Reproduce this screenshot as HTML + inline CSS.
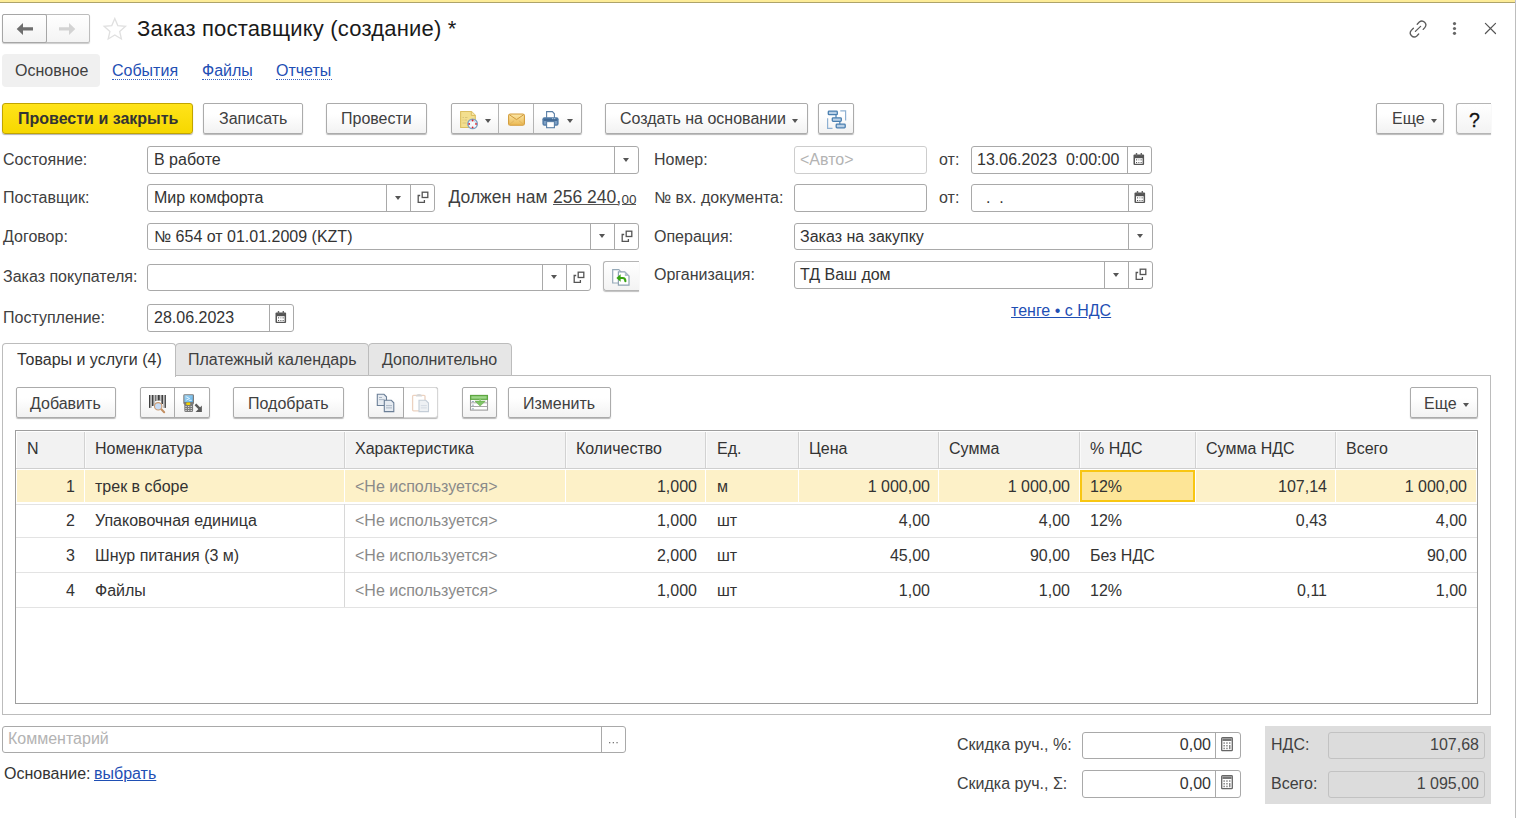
<!DOCTYPE html><html><head><meta charset="utf-8"><style>
html,body{margin:0;padding:0;background:#fff;width:1516px;height:818px;overflow:hidden;position:relative}
body{font-family:"Liberation Sans", sans-serif}
.t{position:absolute;white-space:nowrap}
.b{position:absolute;box-sizing:border-box}
.btn{position:absolute;box-sizing:border-box;border:1px solid #ababab;border-radius:2px;background:linear-gradient(#ffffff 35%,#f2f2f2);box-shadow:0 1px 1px rgba(0,0,0,0.28)}
.fld{position:absolute;box-sizing:border-box;border:1px solid #a9a9a9;border-radius:3px;background:#fff}
.dv{position:absolute;width:1px;background:#a9a9a9}
.dd{position:absolute;width:0;height:0;border-left:3px solid transparent;border-right:3px solid transparent;border-top:4px solid #555}
svg{position:absolute}
</style></head><body>
<div class="b" style="left:0px;top:0px;width:1515px;height:2px;background:#fdec98"></div>
<div class="b" style="left:0px;top:2px;width:1515px;height:1px;background:#aea36a"></div>
<div class="b" style="left:1515px;top:0px;width:1px;height:4px;background:#c2c2d0"></div>
<div class="b" style="left:1515px;top:4px;width:1px;height:814px;background:#bdbdbd"></div>
<div class="b" style="left:2px;top:14px;width:88px;height:29px;border:1px solid #bdbdbd;border-radius:2px;background:linear-gradient(#fff,#f4f4f4);box-shadow:0 1px 1px rgba(0,0,0,0.2)"></div>
<div class="b" style="left:2px;top:14px;width:45px;height:29px;border:1px solid #a6a6a6;border-radius:2px;background:linear-gradient(#fff,#f2f2f2)"></div>
<svg style="left:16px;top:22px" width="18" height="14" viewBox="0 0 18 14"><path d="M0.7 7 L7 0.9 L7 5.3 L17 5.3 L17 8.6 L7 8.6 L7 13.1 Z" fill="#6e6e6e"/></svg>
<svg style="left:59px;top:22px" width="18" height="14" viewBox="0 0 18 14"><path d="M16.3 7 L10 0.9 L10 5.3 L0 5.3 L0 8.6 L10 8.6 L10 13.1 Z" fill="#d3d3d3"/></svg>
<svg style="left:102px;top:16.7px" width="26" height="25" viewBox="0 0 26 25"><path d="M12.8 1.5 L15.8 8.6 L23.5 9.3 L17.7 14.4 L19.4 22 L12.8 18 L6.2 22 L7.9 14.4 L2.1 9.3 L9.8 8.6 Z" fill="none" stroke="#e0e0e0" stroke-width="1.3" stroke-linejoin="miter"/></svg>
<div class="t" style="left:137px;top:18.38px;font-size:22px;line-height:22px;color:#1a1a1a;font-weight:normal;letter-spacing:0.19px">Заказ поставщику (создание) *</div>
<svg style="left:1405px;top:16px" width="26" height="26" viewBox="1405 16 26 26" fill="none" stroke="#5a5a5a" stroke-width="1.3" stroke-linecap="round"><path d="M1417.2 24.2 L1419.3 22.1 A3.9 3.9 0 0 1 1424.8 27.6 L1423.2 29.4"/><path d="M1413.4 28.3 L1411.3 30.4 A3.9 3.9 0 0 0 1416.8 35.9 L1418.7 34"/><path d="M1415.4 31.4 L1420.6 26.4"/></svg>
<svg style="left:1450px;top:20px" width="10" height="17" viewBox="1450 20 10 17" fill="#666"><circle cx="1454.5" cy="23.6" r="1.6"/><circle cx="1454.5" cy="28.5" r="1.6"/><circle cx="1454.5" cy="33.3" r="1.6"/></svg>
<svg style="left:1482px;top:20px" width="17" height="17" viewBox="1482 20 17 17" fill="none" stroke="#555" stroke-width="1.2" stroke-linecap="round"><path d="M1485.4 23.4 L1495.5 33.5 M1495.5 23.4 L1485.4 33.5"/></svg>
<div class="b" style="left:2px;top:54px;width:98px;height:33px;background:#f0f0f0;border-radius:4px"></div>
<div class="t" style="left:15px;top:63.46px;font-size:16px;line-height:16px;color:#404040;font-weight:normal;">Основное</div>
<div class="t" style="left:112px;top:63.46px;font-size:16px;line-height:16px;color:#1f4fb4;font-weight:normal;">События</div>
<div class="b" style="left:112px;top:79px;width:66px;height:1px;border-top:1px dotted #3a64c0"></div>
<div class="t" style="left:202px;top:63.46px;font-size:16px;line-height:16px;color:#1f4fb4;font-weight:normal;">Файлы</div>
<div class="b" style="left:202px;top:79px;width:50px;height:1px;border-top:1px dotted #3a64c0"></div>
<div class="t" style="left:276px;top:63.46px;font-size:16px;line-height:16px;color:#1f4fb4;font-weight:normal;">Отчеты</div>
<div class="b" style="left:276px;top:79px;width:56px;height:1px;border-top:1px dotted #3a64c0"></div>
<div class="b" style="left:2px;top:103px;width:191px;height:31px;border:1px solid #c1a400;border-radius:3px;background:linear-gradient(#ffe31a,#f6d800);box-shadow:0 1px 1px rgba(0,0,0,0.3)"></div>
<div class="t" style="left:18px;top:111.46px;font-size:16px;line-height:16px;color:#333;font-weight:bold;">Провести и закрыть</div>
<div class="btn" style="left:203px;top:103px;width:100px;height:31px;"></div>
<div class="t" style="left:219px;top:111.46px;font-size:16px;line-height:16px;color:#404040;font-weight:normal;">Записать</div>
<div class="btn" style="left:326px;top:103px;width:101px;height:31px;"></div>
<div class="t" style="left:341px;top:111.46px;font-size:16px;line-height:16px;color:#404040;font-weight:normal;">Провести</div>
<div class="btn" style="left:451px;top:103px;width:131px;height:31px;"></div>
<div class="b" style="left:498px;top:104px;width:1px;height:29px;background:#b4b4b4"></div>
<div class="b" style="left:533px;top:104px;width:1px;height:29px;background:#b4b4b4"></div>
<div class="dd" style="left:485px;top:119px"></div>
<div class="dd" style="left:567px;top:119px"></div>
<svg style="left:458px;top:109px" width="22" height="22" viewBox="458 109 22 22"><path d="M460.6 111.5 H471.3 L475.3 115.5 V127.5 H460.6 Z" fill="#f3df8e" stroke="#dcbf62" stroke-width="1.1" stroke-linejoin="round"/><path d="M471.3 111.5 V115.5 H475.3" fill="#f7e7a8" stroke="#dcbf62" stroke-width="1"/><g fill="#d9c47a"><rect x="462.5" y="117" width="1.5" height="1"/><rect x="465" y="117" width="2.5" height="1"/><rect x="462.5" y="119.5" width="1" height="1"/><rect x="464.5" y="119.5" width="2.5" height="1"/><rect x="462.5" y="122.5" width="4" height="1"/></g><circle cx="472.6" cy="123.9" r="4.7" fill="#f4f8fc" stroke="#7fa2c4" stroke-width="1.5"/><path d="M470.5 121.3 A3.3 3.3 0 0 1 475.7 122.8" stroke="#b9cfe5" stroke-width="1" fill="none"/><rect x="472.2" y="120.8" width="0.9" height="3.3" fill="#fff"/><g fill="#e0242a"><circle cx="472.6" cy="120.5" r="0.9"/><circle cx="472.6" cy="127.3" r="0.9"/><circle cx="469.2" cy="123.9" r="0.9"/><circle cx="476" cy="123.9" r="0.9"/></g></svg>
<svg style="left:506px;top:111px" width="21" height="17" viewBox="506 111 21 17"><defs><linearGradient id="eg" x1="0" y1="0" x2="0" y2="1"><stop offset="0" stop-color="#fbe7a8"/><stop offset="1" stop-color="#ebb851"/></linearGradient></defs><rect x="508.6" y="114" width="15.8" height="11.2" rx="1.8" fill="url(#eg)" stroke="#d39c3a" stroke-width="1.1"/><path d="M509.5 114.8 L516.5 119.6 L523.5 114.8" fill="none" stroke="#cf9a3e" stroke-width="1"/><path d="M509.5 124.6 L514.2 120.5 M523.5 124.6 L518.8 120.5" fill="none" stroke="#dcae5c" stroke-width="0.8"/></svg>
<svg style="left:540px;top:109px" width="21" height="21" viewBox="540 109 21 21"><path d="M546.6 117.8 V111.6 H552.4 L554.4 113.8 V117.8" fill="#fff" stroke="#5a7fa6" stroke-width="1.1"/><rect x="542.4" y="117.3" width="16.2" height="8.4" rx="2" fill="#4f79a5"/><rect x="543.8" y="120.6" width="13.4" height="3.8" fill="#7c9fc4"/><rect x="544" y="119.6" width="13" height="0.9" fill="#2c537e"/><rect x="552.3" y="118.2" width="0.9" height="0.9" fill="#dfe8f2"/><rect x="554.3" y="118.2" width="0.9" height="0.9" fill="#dfe8f2"/><rect x="546.6" y="121.6" width="7.8" height="6.1" fill="#fff" stroke="#5a7fa6" stroke-width="1.1"/></svg>
<div class="btn" style="left:605px;top:103px;width:203px;height:31px;"></div>
<div class="t" style="left:620px;top:111.46px;font-size:16px;line-height:16px;color:#404040;font-weight:normal;">Создать на основании</div>
<div class="dd" style="left:792px;top:119px"></div>
<div class="btn" style="left:818px;top:103px;width:36px;height:31px;"></div>
<svg style="left:825px;top:108px" width="22" height="23" viewBox="825 108 22 23" fill="none"><rect x="828.3" y="111.1" width="9" height="3.6" rx="0.8" fill="#b9d0e6" stroke="#4a7fb0" stroke-width="1.3"/><rect x="832.3" y="117.8" width="9" height="3.6" rx="0.8" fill="#b9d0e6" stroke="#4a7fb0" stroke-width="1.3"/><rect x="836.2" y="124.2" width="9" height="3.6" rx="0.8" fill="#b9d0e6" stroke="#4a7fb0" stroke-width="1.3"/><path d="M836 114.7 V117.8 M839.8 121.4 V124.2" stroke="#4a7fb0" stroke-width="1.2"/><path d="M840.3 110.9 H845.6 V120.4" stroke="#8fb1d2" stroke-width="1.2"/><path d="M827.6 118.3 V128.3 H832.5" stroke="#8fb1d2" stroke-width="1.2"/></svg>
<div class="btn" style="left:1376px;top:103px;width:68px;height:31px;"></div>
<div class="t" style="left:1392px;top:111.46px;font-size:16px;line-height:16px;color:#404040;font-weight:normal;">Еще</div>
<div class="dd" style="left:1431px;top:119px"></div>
<div class="b" style="left:1456px;top:103px;width:35px;height:31px;border:1px solid #b5b5b5;border-right:none;border-radius:3px 0 0 3px;background:linear-gradient(#ffffff,#f3f3f3);box-shadow:0 1px 1px rgba(0,0,0,0.25)"></div>
<div class="t" style="left:1469px;top:111.49px;font-size:19.5px;line-height:19.5px;color:#111;font-weight:normal;-webkit-text-stroke:0.3px #111">?</div>
<div class="t" style="left:3px;top:152.46px;font-size:16px;line-height:16px;color:#404040;font-weight:normal;">Состояние:</div>
<div class="t" style="left:3px;top:190.46px;font-size:16px;line-height:16px;color:#404040;font-weight:normal;">Поставщик:</div>
<div class="t" style="left:3px;top:229.46px;font-size:16px;line-height:16px;color:#404040;font-weight:normal;">Договор:</div>
<div class="t" style="left:3px;top:269.46px;font-size:16px;line-height:16px;color:#404040;font-weight:normal;">Заказ покупателя:</div>
<div class="t" style="left:3px;top:310.46px;font-size:16px;line-height:16px;color:#404040;font-weight:normal;">Поступление:</div>
<div class="fld" style="left:147px;top:146px;width:492px;height:28px;border-color:#a9a9a9;background:#fff"></div>
<div class="dv" style="left:614px;top:146px;height:28px"></div>
<div class="dd" style="left:623px;top:157.5px"></div>
<div class="t" style="left:154px;top:152.46px;font-size:16px;line-height:16px;color:#333;font-weight:normal;">В работе</div>
<div class="fld" style="left:147px;top:184px;width:288px;height:28px;border-color:#a9a9a9;background:#fff"></div>
<div class="dv" style="left:410px;top:184px;height:28px"></div>
<svg style="left:417px;top:191px" width="12" height="13" viewBox="0 0 12 13" fill="none" stroke="#555" stroke-width="1.3"><rect x="5.2" y="1.2" width="5.6" height="5.3"/><path d="M3.2 4.5 H1.2 V11.3 H7.4 V9"/></svg>
<div class="dv" style="left:386px;top:184px;height:28px"></div>
<div class="dd" style="left:395px;top:195.5px"></div>
<div class="t" style="left:154px;top:190.46px;font-size:16px;line-height:16px;color:#333;font-weight:normal;">Мир комфорта</div>
<div class="t" style="left:448.5px;top:189.19px;font-size:17.5px;line-height:17.5px;color:#404040;font-weight:normal;">Должен нам</div>
<div class="t" style="left:553px;top:189.19px;font-size:17.5px;line-height:17.5px;color:#404040;font-weight:normal;">256 240,</div>
<div class="t" style="left:621.5px;top:192.57px;font-size:13.5px;line-height:13.5px;color:#404040;font-weight:normal;">00</div>
<div class="b" style="left:553px;top:204px;width:65px;height:1px;background:#555"></div>
<div class="b" style="left:622px;top:204px;width:14px;height:1px;background:#555"></div>
<div class="fld" style="left:147px;top:223px;width:492px;height:27px;border-color:#a9a9a9;background:#fff"></div>
<div class="dv" style="left:614px;top:223px;height:27px"></div>
<svg style="left:621px;top:230px" width="12" height="13" viewBox="0 0 12 13" fill="none" stroke="#555" stroke-width="1.3"><rect x="5.2" y="1.2" width="5.6" height="5.3"/><path d="M3.2 4.5 H1.2 V11.3 H7.4 V9"/></svg>
<div class="dv" style="left:590px;top:223px;height:27px"></div>
<div class="dd" style="left:599px;top:234.0px"></div>
<div class="t" style="left:154px;top:229.46px;font-size:16px;line-height:16px;color:#333;font-weight:normal;">№ 654 от 01.01.2009 (KZT)</div>
<div class="fld" style="left:147px;top:264px;width:444px;height:27px;border-color:#a9a9a9;background:#fff"></div>
<div class="dv" style="left:566px;top:264px;height:27px"></div>
<svg style="left:573px;top:271px" width="12" height="13" viewBox="0 0 12 13" fill="none" stroke="#555" stroke-width="1.3"><rect x="5.2" y="1.2" width="5.6" height="5.3"/><path d="M3.2 4.5 H1.2 V11.3 H7.4 V9"/></svg>
<div class="dv" style="left:542px;top:264px;height:27px"></div>
<div class="dd" style="left:551px;top:275.0px"></div>
<div class="b" style="left:603px;top:261px;width:36px;height:30px;border:1px solid #b5b5b5;border-right:none;border-radius:3px 0 0 3px;background:linear-gradient(#ffffff,#f3f3f3);box-shadow:0 1px 1px rgba(0,0,0,0.25)"></div>
<svg style="left:610px;top:267px" width="22" height="21" viewBox="610 267 22 21"><path d="M612.7 269.7 H618.8 L620.8 271.7 V283 H612.7 Z" fill="#fff" stroke="#95a9b8" stroke-width="1.2"/><path d="M618.4 271.8 H624.8 L629 276 V285.2 H618.4 Z" fill="#fff" stroke="#8ea3b2" stroke-width="1.2"/><path d="M624.8 271.8 V276 H629 Z" fill="#b3c2cd"/><path d="M619.5 278 H622.6 Q625.4 278 625.4 281.3" fill="none" stroke="#37a511" stroke-width="2.1" stroke-linecap="round"/><path d="M616.4 278 L620.6 274.3 L620.6 281.7 Z" fill="#37a511"/></svg>
<div class="fld" style="left:147px;top:304px;width:147px;height:28px;border-color:#a9a9a9;background:#fff"></div>
<div class="dv" style="left:269px;top:304px;height:28px"></div>
<svg style="left:275px;top:310px" width="12" height="14" viewBox="0 0 12 14"><rect x="0.5" y="2.6" width="10.6" height="10.3" rx="1" fill="#555"/><rect x="2" y="6.2" width="7.6" height="5.6" fill="#fff"/><rect x="2.8" y="1" width="1.4" height="3" fill="#666"/><rect x="7.6" y="1" width="1.4" height="3" fill="#666"/><g fill="#8a8a8a"><rect x="3" y="7" width="1.1" height="1.6"/><rect x="5.1" y="7" width="1.4" height="1.6" fill="#c8c8c8"/><rect x="7.6" y="7" width="1.1" height="1.6"/><rect x="3" y="10" width="1.1" height="1.1" fill="#555"/><rect x="5.1" y="10" width="1.4" height="1.1"/><rect x="7.6" y="10" width="1.1" height="1.1" fill="#555"/></g></svg>
<div class="t" style="left:154px;top:310.46px;font-size:16px;line-height:16px;color:#333;font-weight:normal;">28.06.2023</div>
<div class="t" style="left:654px;top:152.46px;font-size:16px;line-height:16px;color:#404040;font-weight:normal;">Номер:</div>
<div class="t" style="left:654px;top:190.46px;font-size:16px;line-height:16px;color:#404040;font-weight:normal;">№ вх. документа:</div>
<div class="t" style="left:654px;top:229.46px;font-size:16px;line-height:16px;color:#404040;font-weight:normal;">Операция:</div>
<div class="t" style="left:654px;top:267.46px;font-size:16px;line-height:16px;color:#404040;font-weight:normal;">Организация:</div>
<div class="fld" style="left:794px;top:146px;width:133px;height:28px;border-color:#cdcdcd;background:#fff"></div>
<div class="t" style="left:800px;top:152.46px;font-size:16px;line-height:16px;color:#b3b3b3;font-weight:normal;">&lt;Авто&gt;</div>
<div class="t" style="left:939px;top:152.46px;font-size:16px;line-height:16px;color:#404040;font-weight:normal;">от:</div>
<div class="fld" style="left:971px;top:146px;width:181px;height:28px;border-color:#a9a9a9;background:#fff"></div>
<div class="dv" style="left:1127px;top:146px;height:28px"></div>
<svg style="left:1133px;top:152px" width="12" height="14" viewBox="0 0 12 14"><rect x="0.5" y="2.6" width="10.6" height="10.3" rx="1" fill="#555"/><rect x="2" y="6.2" width="7.6" height="5.6" fill="#fff"/><rect x="2.8" y="1" width="1.4" height="3" fill="#666"/><rect x="7.6" y="1" width="1.4" height="3" fill="#666"/><g fill="#8a8a8a"><rect x="3" y="7" width="1.1" height="1.6"/><rect x="5.1" y="7" width="1.4" height="1.6" fill="#c8c8c8"/><rect x="7.6" y="7" width="1.1" height="1.6"/><rect x="3" y="10" width="1.1" height="1.1" fill="#555"/><rect x="5.1" y="10" width="1.4" height="1.1"/><rect x="7.6" y="10" width="1.1" height="1.1" fill="#555"/></g></svg>
<div class="t" style="left:977px;top:152.46px;font-size:16px;line-height:16px;color:#333;font-weight:normal;">13.06.2023&nbsp; 0:00:00</div>
<div class="fld" style="left:794px;top:184px;width:133px;height:28px;border-color:#a9a9a9;background:#fff"></div>
<div class="t" style="left:939px;top:190.46px;font-size:16px;line-height:16px;color:#404040;font-weight:normal;">от:</div>
<div class="fld" style="left:971px;top:184px;width:182px;height:28px;border-color:#a9a9a9;background:#fff"></div>
<div class="dv" style="left:1128px;top:184px;height:28px"></div>
<svg style="left:1134px;top:190px" width="12" height="14" viewBox="0 0 12 14"><rect x="0.5" y="2.6" width="10.6" height="10.3" rx="1" fill="#555"/><rect x="2" y="6.2" width="7.6" height="5.6" fill="#fff"/><rect x="2.8" y="1" width="1.4" height="3" fill="#666"/><rect x="7.6" y="1" width="1.4" height="3" fill="#666"/><g fill="#8a8a8a"><rect x="3" y="7" width="1.1" height="1.6"/><rect x="5.1" y="7" width="1.4" height="1.6" fill="#c8c8c8"/><rect x="7.6" y="7" width="1.1" height="1.6"/><rect x="3" y="10" width="1.1" height="1.1" fill="#555"/><rect x="5.1" y="10" width="1.4" height="1.1"/><rect x="7.6" y="10" width="1.1" height="1.1" fill="#555"/></g></svg>
<div class="t" style="left:986px;top:190.46px;font-size:16px;line-height:16px;color:#333;font-weight:normal;">.&nbsp; .</div>
<div class="fld" style="left:794px;top:223px;width:359px;height:27px;border-color:#a9a9a9;background:#fff"></div>
<div class="dv" style="left:1128px;top:223px;height:27px"></div>
<div class="dd" style="left:1137px;top:234.0px"></div>
<div class="t" style="left:800px;top:229.46px;font-size:16px;line-height:16px;color:#333;font-weight:normal;">Заказ на закупку</div>
<div class="fld" style="left:794px;top:261px;width:359px;height:28px;border-color:#a9a9a9;background:#fff"></div>
<div class="dv" style="left:1128px;top:261px;height:28px"></div>
<svg style="left:1135px;top:268px" width="12" height="13" viewBox="0 0 12 13" fill="none" stroke="#555" stroke-width="1.3"><rect x="5.2" y="1.2" width="5.6" height="5.3"/><path d="M3.2 4.5 H1.2 V11.3 H7.4 V9"/></svg>
<div class="dv" style="left:1104px;top:261px;height:28px"></div>
<div class="dd" style="left:1113px;top:272.5px"></div>
<div class="t" style="left:800px;top:267.46px;font-size:16px;line-height:16px;color:#333;font-weight:normal;">ТД Ваш дом</div>
<div class="t" style="left:1011px;top:303.46px;font-size:16px;line-height:16px;color:#1f4fb4;font-weight:normal;text-decoration:underline">тенге • с НДС</div>
<div class="b" style="left:2px;top:375px;width:1489px;height:340px;border:1px solid #bcbcbc"></div>
<div class="b" style="left:175px;top:343px;width:194px;height:33px;border:1px solid #bcbcbc;border-radius:4px 4px 0 0;background:#e6e6e6"></div>
<div class="b" style="left:368px;top:343px;width:144px;height:33px;border:1px solid #bcbcbc;border-radius:4px 4px 0 0;background:#e6e6e6"></div>
<div class="b" style="left:2px;top:343px;width:174px;height:34px;border:1px solid #bcbcbc;border-bottom:none;border-radius:4px 4px 0 0;background:#fff"></div>
<div class="t" style="left:17px;top:352.46px;font-size:16px;line-height:16px;color:#333;font-weight:normal;">Товары и услуги (4)</div>
<div class="t" style="left:188px;top:352.46px;font-size:16px;line-height:16px;color:#404040;font-weight:normal;">Платежный календарь</div>
<div class="t" style="left:382px;top:352.46px;font-size:16px;line-height:16px;color:#404040;font-weight:normal;">Дополнительно</div>
<div class="btn" style="left:16px;top:387px;width:100px;height:31px;"></div>
<div class="t" style="left:30px;top:396.46px;font-size:16px;line-height:16px;color:#404040;font-weight:normal;">Добавить</div>
<div class="btn" style="left:140px;top:387px;width:70px;height:31px;"></div>
<div class="b" style="left:174px;top:388px;width:1px;height:29px;background:#ababab"></div>
<svg style="left:147px;top:393px" width="20" height="21" viewBox="147 393 20 21"><g fill="#c4c4c4"><rect x="150.3" y="395" width="1.6" height="12.9"/><rect x="153.5" y="395" width="1.8" height="10"/><rect x="156.1" y="395" width="1.6" height="6"/><rect x="159.8" y="395" width="1.6" height="6"/><rect x="163" y="395" width="1.6" height="12.9"/></g><g fill="#3f3f3f"><rect x="149" y="395" width="1.3" height="12.9"/><rect x="151.9" y="395" width="1.6" height="11"/><rect x="155.3" y="395" width="0.9" height="6"/><rect x="157.7" y="395" width="2.1" height="5.5"/><rect x="161.4" y="395" width="1.6" height="9"/><rect x="164.6" y="395" width="1.3" height="12.9"/></g><line x1="161.3" y1="409.3" x2="164.2" y2="412.3" stroke="#c38f62" stroke-width="2" stroke-linecap="round"/><circle cx="158.2" cy="406.3" r="3.7" fill="#c9ddf6" stroke="#cc9a70" stroke-width="1.1"/></svg>
<svg style="left:181px;top:392px" width="24" height="22" viewBox="181 392 24 22"><path d="M183.3 395.6 Q183.3 394.2 184.7 394.2 H192.6 Q194 394.2 194 395.6 V403.3 L193.1 404.8 V410.4 Q193.1 411.9 191.6 411.9 H185.8 Q184.3 411.9 184.3 410.4 V404.8 L183.3 403.3 Z" fill="#7a7a7a"/><defs><linearGradient id="sg" x1="0" y1="0" x2="1" y2="1"><stop offset="0" stop-color="#a6d6f3"/><stop offset="1" stop-color="#5cb0e8"/></linearGradient></defs><rect x="184.4" y="395.2" width="8.4" height="6.8" fill="url(#sg)"/><path d="M186.2 396.8 L189.6 398.5 L186.2 400.2" stroke="#eaf6fe" stroke-width="0.9" fill="none"/><rect x="188.8" y="399.8" width="3" height="0.9" fill="#eaf6fe"/><rect x="186.2" y="402.6" width="4.1" height="2.3" rx="0.9" fill="#efd300"/><g fill="#d8d8d8"><rect x="185.4" y="406" width="1.3" height="1"/><rect x="188" y="406" width="1.3" height="1"/><rect x="190.6" y="406" width="1.3" height="1"/><rect x="185.4" y="408" width="1.3" height="1"/><rect x="188" y="408" width="1.3" height="1"/><rect x="190.6" y="408" width="1.3" height="1"/><rect x="185.4" y="410" width="1.3" height="1"/><rect x="188" y="410" width="1.3" height="1"/><rect x="190.6" y="410" width="1.3" height="1"/></g><line x1="195.4" y1="404.4" x2="199.6" y2="408.6" stroke="#5a5a5a" stroke-width="2.4"/><path d="M201.9 405.6 V411.9 H195.6 Z" fill="#5a5a5a"/></svg>
<div class="btn" style="left:233px;top:387px;width:111px;height:31px;"></div>
<div class="t" style="left:248px;top:396.46px;font-size:16px;line-height:16px;color:#404040;font-weight:normal;">Подобрать</div>
<div class="btn" style="left:368px;top:387px;width:70px;height:31px;border-color:#ababab"></div>
<div class="b" style="left:403px;top:387px;width:35px;height:31px;border:1px solid #d6d6d6;border-left:none;border-radius:0 3px 3px 0;background:#fff"></div>
<div class="b" style="left:403px;top:387px;width:1px;height:31px;background:#a8a8a8"></div>
<svg style="left:376px;top:393px" width="20" height="20" viewBox="0 0 20 20"><path d="M1.3 1.3 L8 1.3 L10.5 3.8 L10.5 12.5 L1.3 12.5 Z" fill="#e6ebf1" stroke="#6b7f97" stroke-width="1.1"/><path d="M8.3 7.3 L15.3 7.3 L17.8 9.8 L17.8 18.6 L8.3 18.6 Z" fill="#e6ebf1" stroke="#6b7f97" stroke-width="1.1"/><g fill="#9aa8b8"><rect x="3" y="4" width="3" height="0.8"/><rect x="3" y="6.3" width="5.5" height="0.8"/><rect x="10" y="12.3" width="6" height="0.8"/><rect x="10" y="14.5" width="6" height="0.8"/></g></svg>
<svg style="left:411px;top:393px" width="20" height="20" viewBox="0 0 20 20"><rect x="1.6" y="2.3" width="12.4" height="15.5" rx="1" fill="#fff" stroke="#ecd2c0" stroke-width="1.3"/><path d="M4.8 3.5 Q5 1 8 1 Q11 1 11.2 3.5 Z" fill="#d6d6d6"/><path d="M8 7.3 L14.8 7.3 L17.5 10 L17.5 18.6 L8 18.6 Z" fill="#eef1f4" stroke="#c5ced8" stroke-width="1.1"/><g fill="#cdd5de"><rect x="9.8" y="12.3" width="6" height="0.8"/><rect x="9.8" y="14.5" width="6" height="0.8"/></g></svg>
<div class="btn" style="left:462px;top:387px;width:35px;height:31px;"></div>
<svg style="left:468px;top:393px" width="22" height="20" viewBox="468 393 22 20"><rect x="470.5" y="395.5" width="17" height="14.6" fill="#fff" stroke="#9c9c9c" stroke-width="1.1"/><rect x="470" y="394.9" width="18" height="5" fill="#5da641"/><rect x="471.3" y="396.2" width="15.4" height="2.5" fill="#9ed789"/><rect x="470.5" y="402.3" width="17" height="1" fill="#a8a8a8"/><rect x="470.5" y="406" width="17" height="1" fill="#a8a8a8"/><g fill="#8aa0b5"><rect x="471.9" y="401" width="2" height="0.9"/><rect x="471.9" y="404.7" width="2" height="0.9"/><rect x="471.9" y="408.4" width="2" height="0.9"/></g><rect x="479.4" y="399" width="1.4" height="2.6" fill="#8ccf75"/><path d="M474.9 401.1 H485.3 L480.1 406.1 Z" fill="#7ec566" stroke="#5a9e3c" stroke-width="0.5"/></svg>
<div class="btn" style="left:508px;top:387px;width:103px;height:31px;"></div>
<div class="t" style="left:523px;top:396.46px;font-size:16px;line-height:16px;color:#404040;font-weight:normal;">Изменить</div>
<div class="btn" style="left:1410px;top:387px;width:68px;height:31px;"></div>
<div class="t" style="left:1424px;top:396.46px;font-size:16px;line-height:16px;color:#404040;font-weight:normal;">Еще</div>
<div class="dd" style="left:1463px;top:403px"></div>
<div class="b" style="left:15px;top:430px;width:1463px;height:274px;border:1px solid #9e9e9e;background:#fff"></div>
<div class="b" style="left:17px;top:432px;width:1459px;height:36px;background:#f2f2f2"></div>
<div class="b" style="left:16px;top:468px;width:1461px;height:1px;background:#cfcfcf"></div>
<div class="b" style="left:84px;top:432px;width:1px;height:36px;background:#d2d2d2"></div>
<div class="b" style="left:85px;top:432px;width:1px;height:36px;background:#fafafa"></div>
<div class="b" style="left:344px;top:432px;width:1px;height:36px;background:#d2d2d2"></div>
<div class="b" style="left:345px;top:432px;width:1px;height:36px;background:#fafafa"></div>
<div class="b" style="left:565px;top:432px;width:1px;height:36px;background:#d2d2d2"></div>
<div class="b" style="left:566px;top:432px;width:1px;height:36px;background:#fafafa"></div>
<div class="b" style="left:705px;top:432px;width:1px;height:36px;background:#d2d2d2"></div>
<div class="b" style="left:706px;top:432px;width:1px;height:36px;background:#fafafa"></div>
<div class="b" style="left:798px;top:432px;width:1px;height:36px;background:#d2d2d2"></div>
<div class="b" style="left:799px;top:432px;width:1px;height:36px;background:#fafafa"></div>
<div class="b" style="left:938px;top:432px;width:1px;height:36px;background:#d2d2d2"></div>
<div class="b" style="left:939px;top:432px;width:1px;height:36px;background:#fafafa"></div>
<div class="b" style="left:1079px;top:432px;width:1px;height:36px;background:#d2d2d2"></div>
<div class="b" style="left:1080px;top:432px;width:1px;height:36px;background:#fafafa"></div>
<div class="b" style="left:1195px;top:432px;width:1px;height:36px;background:#d2d2d2"></div>
<div class="b" style="left:1196px;top:432px;width:1px;height:36px;background:#fafafa"></div>
<div class="b" style="left:1335px;top:432px;width:1px;height:36px;background:#d2d2d2"></div>
<div class="b" style="left:1336px;top:432px;width:1px;height:36px;background:#fafafa"></div>
<div class="b" style="left:17px;top:470px;width:1459px;height:32px;background:#fdf1c8"></div>
<div class="b" style="left:84px;top:470px;width:1px;height:32px;background:#fff"></div>
<div class="b" style="left:344px;top:470px;width:1px;height:32px;background:#fff"></div>
<div class="b" style="left:565px;top:470px;width:1px;height:32px;background:#fff"></div>
<div class="b" style="left:705px;top:470px;width:1px;height:32px;background:#fff"></div>
<div class="b" style="left:798px;top:470px;width:1px;height:32px;background:#fff"></div>
<div class="b" style="left:938px;top:470px;width:1px;height:32px;background:#fff"></div>
<div class="b" style="left:1079px;top:470px;width:1px;height:32px;background:#fff"></div>
<div class="b" style="left:1195px;top:470px;width:1px;height:32px;background:#fff"></div>
<div class="b" style="left:1335px;top:470px;width:1px;height:32px;background:#fff"></div>
<div class="b" style="left:1080px;top:470px;width:115px;height:32px;border:2px solid #f8c612;background:#fde597"></div>
<div class="b" style="left:16px;top:504px;width:1461px;height:1px;background:#e3e3e3"></div>
<div class="b" style="left:16px;top:537px;width:1461px;height:1px;background:#e3e3e3"></div>
<div class="b" style="left:16px;top:572px;width:1461px;height:1px;background:#e3e3e3"></div>
<div class="b" style="left:16px;top:607px;width:1461px;height:1px;background:#e3e3e3"></div>
<div class="b" style="left:344px;top:504px;width:1px;height:103px;background:#d8d8d8"></div>
<div class="t" style="left:27px;top:441.46px;font-size:16px;line-height:16px;color:#333;font-weight:normal;">N</div>
<div class="t" style="left:95px;top:441.46px;font-size:16px;line-height:16px;color:#333;font-weight:normal;">Номенклатура</div>
<div class="t" style="left:355px;top:441.46px;font-size:16px;line-height:16px;color:#333;font-weight:normal;">Характеристика</div>
<div class="t" style="left:576px;top:441.46px;font-size:16px;line-height:16px;color:#333;font-weight:normal;">Количество</div>
<div class="t" style="left:717px;top:441.46px;font-size:16px;line-height:16px;color:#333;font-weight:normal;">Ед.</div>
<div class="t" style="left:809px;top:441.46px;font-size:16px;line-height:16px;color:#333;font-weight:normal;">Цена</div>
<div class="t" style="left:949px;top:441.46px;font-size:16px;line-height:16px;color:#333;font-weight:normal;">Сумма</div>
<div class="t" style="left:1090px;top:441.46px;font-size:16px;line-height:16px;color:#333;font-weight:normal;">% НДС</div>
<div class="t" style="left:1206px;top:441.46px;font-size:16px;line-height:16px;color:#333;font-weight:normal;">Сумма НДС</div>
<div class="t" style="left:1346px;top:441.46px;font-size:16px;line-height:16px;color:#333;font-weight:normal;">Всего</div>
<div class="t" style="right:1441px;top:479.46px;font-size:16px;line-height:16px;color:#333;font-weight:normal;">1</div>
<div class="t" style="left:95px;top:479.46px;font-size:16px;line-height:16px;color:#333;font-weight:normal;">трек в сборе</div>
<div class="t" style="left:355px;top:479.46px;font-size:16px;line-height:16px;color:#8a8a8a;font-weight:normal;">&lt;Не используется&gt;</div>
<div class="t" style="right:819px;top:479.46px;font-size:16px;line-height:16px;color:#333;font-weight:normal;">1,000</div>
<div class="t" style="left:717px;top:479.46px;font-size:16px;line-height:16px;color:#333;font-weight:normal;">м</div>
<div class="t" style="right:586px;top:479.46px;font-size:16px;line-height:16px;color:#333;font-weight:normal;">1 000,00</div>
<div class="t" style="right:446px;top:479.46px;font-size:16px;line-height:16px;color:#333;font-weight:normal;">1 000,00</div>
<div class="t" style="left:1090px;top:479.46px;font-size:16px;line-height:16px;color:#333;font-weight:normal;">12%</div>
<div class="t" style="right:189px;top:479.46px;font-size:16px;line-height:16px;color:#333;font-weight:normal;">107,14</div>
<div class="t" style="right:49px;top:479.46px;font-size:16px;line-height:16px;color:#333;font-weight:normal;">1 000,00</div>
<div class="t" style="right:1441px;top:513.46px;font-size:16px;line-height:16px;color:#333;font-weight:normal;">2</div>
<div class="t" style="left:95px;top:513.46px;font-size:16px;line-height:16px;color:#333;font-weight:normal;">Упаковочная единица</div>
<div class="t" style="left:355px;top:513.46px;font-size:16px;line-height:16px;color:#8a8a8a;font-weight:normal;">&lt;Не используется&gt;</div>
<div class="t" style="right:819px;top:513.46px;font-size:16px;line-height:16px;color:#333;font-weight:normal;">1,000</div>
<div class="t" style="left:717px;top:513.46px;font-size:16px;line-height:16px;color:#333;font-weight:normal;">шт</div>
<div class="t" style="right:586px;top:513.46px;font-size:16px;line-height:16px;color:#333;font-weight:normal;">4,00</div>
<div class="t" style="right:446px;top:513.46px;font-size:16px;line-height:16px;color:#333;font-weight:normal;">4,00</div>
<div class="t" style="left:1090px;top:513.46px;font-size:16px;line-height:16px;color:#333;font-weight:normal;">12%</div>
<div class="t" style="right:189px;top:513.46px;font-size:16px;line-height:16px;color:#333;font-weight:normal;">0,43</div>
<div class="t" style="right:49px;top:513.46px;font-size:16px;line-height:16px;color:#333;font-weight:normal;">4,00</div>
<div class="t" style="right:1441px;top:548.46px;font-size:16px;line-height:16px;color:#333;font-weight:normal;">3</div>
<div class="t" style="left:95px;top:548.46px;font-size:16px;line-height:16px;color:#333;font-weight:normal;">Шнур питания (3 м)</div>
<div class="t" style="left:355px;top:548.46px;font-size:16px;line-height:16px;color:#8a8a8a;font-weight:normal;">&lt;Не используется&gt;</div>
<div class="t" style="right:819px;top:548.46px;font-size:16px;line-height:16px;color:#333;font-weight:normal;">2,000</div>
<div class="t" style="left:717px;top:548.46px;font-size:16px;line-height:16px;color:#333;font-weight:normal;">шт</div>
<div class="t" style="right:586px;top:548.46px;font-size:16px;line-height:16px;color:#333;font-weight:normal;">45,00</div>
<div class="t" style="right:446px;top:548.46px;font-size:16px;line-height:16px;color:#333;font-weight:normal;">90,00</div>
<div class="t" style="left:1090px;top:548.46px;font-size:16px;line-height:16px;color:#333;font-weight:normal;">Без НДС</div>
<div class="t" style="right:49px;top:548.46px;font-size:16px;line-height:16px;color:#333;font-weight:normal;">90,00</div>
<div class="t" style="right:1441px;top:583.46px;font-size:16px;line-height:16px;color:#333;font-weight:normal;">4</div>
<div class="t" style="left:95px;top:583.46px;font-size:16px;line-height:16px;color:#333;font-weight:normal;">Файлы</div>
<div class="t" style="left:355px;top:583.46px;font-size:16px;line-height:16px;color:#8a8a8a;font-weight:normal;">&lt;Не используется&gt;</div>
<div class="t" style="right:819px;top:583.46px;font-size:16px;line-height:16px;color:#333;font-weight:normal;">1,000</div>
<div class="t" style="left:717px;top:583.46px;font-size:16px;line-height:16px;color:#333;font-weight:normal;">шт</div>
<div class="t" style="right:586px;top:583.46px;font-size:16px;line-height:16px;color:#333;font-weight:normal;">1,00</div>
<div class="t" style="right:446px;top:583.46px;font-size:16px;line-height:16px;color:#333;font-weight:normal;">1,00</div>
<div class="t" style="left:1090px;top:583.46px;font-size:16px;line-height:16px;color:#333;font-weight:normal;">12%</div>
<div class="t" style="right:189px;top:583.46px;font-size:16px;line-height:16px;color:#333;font-weight:normal;">0,11</div>
<div class="t" style="right:49px;top:583.46px;font-size:16px;line-height:16px;color:#333;font-weight:normal;">1,00</div>
<div class="fld" style="left:2px;top:726px;width:624px;height:27px;border-color:#a9a9a9;background:#fff"></div>
<div class="dv" style="left:601px;top:726px;height:27px"></div>
<svg style="left:604.5px;top:741px" width="16" height="4" viewBox="0 0 16 4" fill="#777"><rect x="4" y="1" width="1.3" height="1.3"/><rect x="7.7" y="1" width="1.3" height="1.3"/><rect x="11.4" y="1" width="1.3" height="1.3"/></svg>
<div class="t" style="left:8px;top:731.46px;font-size:16px;line-height:16px;color:#b3b3b3;font-weight:normal;">Комментарий</div>
<div class="t" style="left:4px;top:766.46px;font-size:16px;line-height:16px;color:#333;font-weight:normal;">Основание:</div>
<div class="t" style="left:94px;top:766.46px;font-size:16px;line-height:16px;color:#1f4fb4;font-weight:normal;text-decoration:underline">выбрать</div>
<div class="t" style="left:957px;top:737.46px;font-size:16px;line-height:16px;color:#404040;font-weight:normal;">Скидка руч., %:</div>
<div class="t" style="left:957px;top:776.46px;font-size:16px;line-height:16px;color:#404040;font-weight:normal;">Скидка руч., Σ:</div>
<div class="fld" style="left:1082px;top:732px;width:159px;height:27px;border-color:#a9a9a9;background:#fff"></div>
<div class="dv" style="left:1215px;top:732px;height:27px"></div>
<svg style="left:1221px;top:737px" width="12" height="15" viewBox="0 0 12 15"><rect x="0.7" y="0.7" width="10.6" height="13" rx="0.8" fill="#fff" stroke="#666" stroke-width="1.3"/><rect x="1.4" y="1.4" width="9.2" height="2.6" fill="#777"/><g fill="#888"><rect x="2.4" y="5.3" width="1.5" height="1.5"/><rect x="5.2" y="5.3" width="1.5" height="1.5"/><rect x="8" y="5.3" width="1.5" height="1.5"/><rect x="2.4" y="8" width="1.5" height="1.5"/><rect x="5.2" y="8" width="1.5" height="1.5"/><rect x="8" y="8" width="1.5" height="4.2"/><rect x="2.4" y="10.7" width="1.5" height="1.5"/><rect x="5.2" y="10.7" width="1.5" height="1.5"/></g></svg>
<div class="t" style="right:305px;top:737.46px;font-size:16px;line-height:16px;color:#333;font-weight:normal;">0,00</div>
<div class="fld" style="left:1082px;top:770px;width:159px;height:28px;border-color:#a9a9a9;background:#fff"></div>
<div class="dv" style="left:1215px;top:770px;height:28px"></div>
<svg style="left:1221px;top:775px" width="12" height="15" viewBox="0 0 12 15"><rect x="0.7" y="0.7" width="10.6" height="13" rx="0.8" fill="#fff" stroke="#666" stroke-width="1.3"/><rect x="1.4" y="1.4" width="9.2" height="2.6" fill="#777"/><g fill="#888"><rect x="2.4" y="5.3" width="1.5" height="1.5"/><rect x="5.2" y="5.3" width="1.5" height="1.5"/><rect x="8" y="5.3" width="1.5" height="1.5"/><rect x="2.4" y="8" width="1.5" height="1.5"/><rect x="5.2" y="8" width="1.5" height="1.5"/><rect x="8" y="8" width="1.5" height="4.2"/><rect x="2.4" y="10.7" width="1.5" height="1.5"/><rect x="5.2" y="10.7" width="1.5" height="1.5"/></g></svg>
<div class="t" style="right:305px;top:776.46px;font-size:16px;line-height:16px;color:#333;font-weight:normal;">0,00</div>
<div class="b" style="left:1265px;top:726px;width:226px;height:78px;background:#dddddd"></div>
<div class="t" style="left:1271px;top:737.46px;font-size:16px;line-height:16px;color:#404040;font-weight:normal;">НДС:</div>
<div class="t" style="left:1271px;top:776.46px;font-size:16px;line-height:16px;color:#404040;font-weight:normal;">Всего:</div>
<div class="b" style="left:1328px;top:732px;width:157px;height:27px;border:1px solid #c2c2c2;border-radius:3px;background:#dcdcdc"></div>
<div class="b" style="left:1328px;top:771px;width:157px;height:27px;border:1px solid #c2c2c2;border-radius:3px;background:#dcdcdc"></div>
<div class="t" style="right:37px;top:737.46px;font-size:16px;line-height:16px;color:#444;font-weight:normal;">107,68</div>
<div class="t" style="right:37px;top:776.46px;font-size:16px;line-height:16px;color:#444;font-weight:normal;">1 095,00</div>
</body></html>
